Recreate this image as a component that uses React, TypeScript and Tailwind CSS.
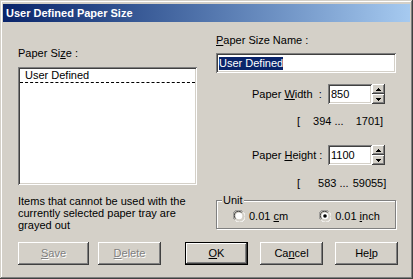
import React from "react";

const raised =
  "shadow-[inset_-1px_-1px_#404040,inset_1px_1px_#ffffff,inset_-2px_-2px_#808080,inset_2px_2px_#d4d0c8]";
const sunken =
  "shadow-[inset_1px_1px_#808080,inset_-1px_-1px_#ffffff,inset_2px_2px_#404040,inset_-2px_-2px_#d4d0c8]";

function Btn({
  children,
  disabled,
  isDefault,
  w = "w-[63px]",
  className = "",
}: {
  children: React.ReactNode;
  disabled?: boolean;
  isDefault?: boolean;
  w?: string;
  className?: string;
}) {
  return (
    <div
      className={`${w} h-[23px] bg-[#d4d0c8] ${isDefault ? "border border-black" : ""} ${className}`}
    >
      <div
        className={`w-full h-full flex items-center justify-center ${raised} ${
          disabled ? "text-[#808080] [text-shadow:1px_1px_#ffffff]" : "text-black"
        }`}
      >
        {children}
      </div>
    </div>
  );
}

function Spinner() {
  return (
    <div className="w-[13px] h-[20px] flex flex-col">
      <div className={`h-[10px] flex items-center justify-center bg-[#d4d0c8] ${raised}`}>
        <svg width="5" height="3" viewBox="0 0 5 3">
          <path d="M2 0h1v1h1v1h1v1H0V2h1V1h1z" fill="#000" />
        </svg>
      </div>
      <div className={`h-[10px] flex items-center justify-center bg-[#d4d0c8] ${raised}`}>
        <svg width="5" height="3" viewBox="0 0 5 3">
          <path d="M0 0h5v1H4v1H3v1H2V2H1V1H0z" fill="#000" />
        </svg>
      </div>
    </div>
  );
}

function Radio({ checked }: { checked?: boolean }) {
  return (
    <svg width="12" height="12" viewBox="0 0 12 12">
      <path d="M1.5 9.5A5 5 0 0 1 9.5 1.5" stroke="#808080" fill="none" />
      <path d="M2.5 8.5A3.6 3.6 0 0 1 8.5 2.5" stroke="#404040" fill="none" />
      <path d="M10.5 2.5A5 5 0 0 1 2.5 10.5" stroke="#ffffff" fill="none" />
      <path d="M9.5 3.5A3.6 3.6 0 0 1 3.5 9.5" stroke="#d4d0c8" fill="none" />
      <circle cx="6" cy="6" r="3.3" fill="#ffffff" />
      {checked && <circle cx="6" cy="6" r="1.8" fill="#000" />}
    </svg>
  );
}

export default function App() {
  return (
    <div className="w-[413px] h-[279px] bg-[#d4d0c8] font-['Liberation_Sans',Arial,sans-serif] text-[11px] leading-[13px] text-black select-none shadow-[inset_-1px_-1px_#404040,inset_1px_1px_#d4d0c8,inset_-2px_-2px_#808080,inset_2px_2px_#ffffff] pt-[4px] px-[3px] flex flex-col">
      {/* title bar */}
      <div className="h-[18px] bg-gradient-to-r from-[#0a246a] to-[#a6caf0] flex items-center pl-[3px]">
        <span className="text-white font-bold text-[11px]">User Defined Paper Size</span>
      </div>

      <div className="flex">
        {/* left column */}
        <div className="ml-[15px] w-[179px] flex flex-col">
          <div className="mt-[25px] h-[13px]">
            Paper Si<span className="underline">z</span>e :
          </div>
          <div className={`mt-[7px] h-[118px] bg-white ${sunken} p-[2px]`}>
            <div className="h-[14px] pl-[5px] leading-[13px] border-b border-dashed border-black">
              User Defined
            </div>
          </div>
          <div className="mt-[10px] leading-[12px]">
            Items that cannot be used with the
            <br />
            currently selected paper tray are
            <br />
            grayed out
          </div>
        </div>

        {/* right column */}
        <div className="ml-[19px] w-[180px] flex flex-col">
          <div className="mt-[12px] h-[13px]">
            <span className="underline">P</span>aper Size Name :
          </div>
          <div className={`mt-[6px] h-[20px] bg-white ${sunken} flex items-center pl-[3px]`}>
            <span className="bg-[#0a246a] text-white h-[13px] leading-[13px]">User Defined</span>
          </div>

          <div className="mt-[11px] h-[20px] flex items-center">
            <span className="ml-[36px] w-[76px]">
              Paper <span className="underline">W</span>idth&nbsp;&nbsp;:
            </span>
            <div className={`w-[44px] h-[20px] bg-white ${sunken} flex items-center pl-[3px]`}>850</div>
            <Spinner />
          </div>

          <div className="mt-[11px] h-[13px] flex">
            <span className="ml-[81px]">[</span>
            <span className="ml-[13px]">394 ...</span>
            <span className="ml-[12px]">1701]</span>
          </div>

          <div className="mt-[17px] h-[20px] flex items-center">
            <span className="ml-[36px] w-[76px]">
              Paper <span className="underline">H</span>eight :
            </span>
            <div className={`w-[44px] h-[20px] bg-white ${sunken} flex items-center pl-[3px]`}>1100</div>
            <Spinner />
          </div>

          <div className="mt-[12px] h-[13px] flex">
            <span className="ml-[81px]">[</span>
            <span className="ml-[18px]">583 ...</span>
            <span className="ml-[4px]">59055]</span>
          </div>

          <div className="mt-[10px] h-[29px] relative border border-[#808080] shadow-[inset_1px_1px_#ffffff,1px_1px_#ffffff] flex items-center">
            <span className="absolute -top-[7px] left-[5px] px-[1px] bg-[#d4d0c8]">Unit</span>
            <div className="ml-[16px] mt-[3px] flex items-center">
              <Radio />
              <span className="ml-[4px]">
                0.01 <span className="underline">c</span>m
              </span>
            </div>
            <div className="ml-[31px] mt-[3px] flex items-center">
              <Radio checked />
              <span className="ml-[4px]">
                0.01 <span className="underline">i</span>nch
              </span>
            </div>
          </div>
        </div>
      </div>

      {/* buttons */}
      <div className="mt-[11px] flex">
        <Btn disabled w="w-[71px]" className="ml-[15px]">
          <span className="underline">S</span>ave
        </Btn>
        <Btn disabled className="ml-[9px]">
          <span className="underline">D</span>elete
        </Btn>
        <Btn isDefault className="ml-[24px]">
          <span className="underline">O</span>K
        </Btn>
        <Btn className="ml-[12px]">
          Ca<span className="underline">n</span>cel
        </Btn>
        <Btn className="ml-[12px]">
          He<span className="underline">l</span>p
        </Btn>
      </div>
    </div>
  );
}
